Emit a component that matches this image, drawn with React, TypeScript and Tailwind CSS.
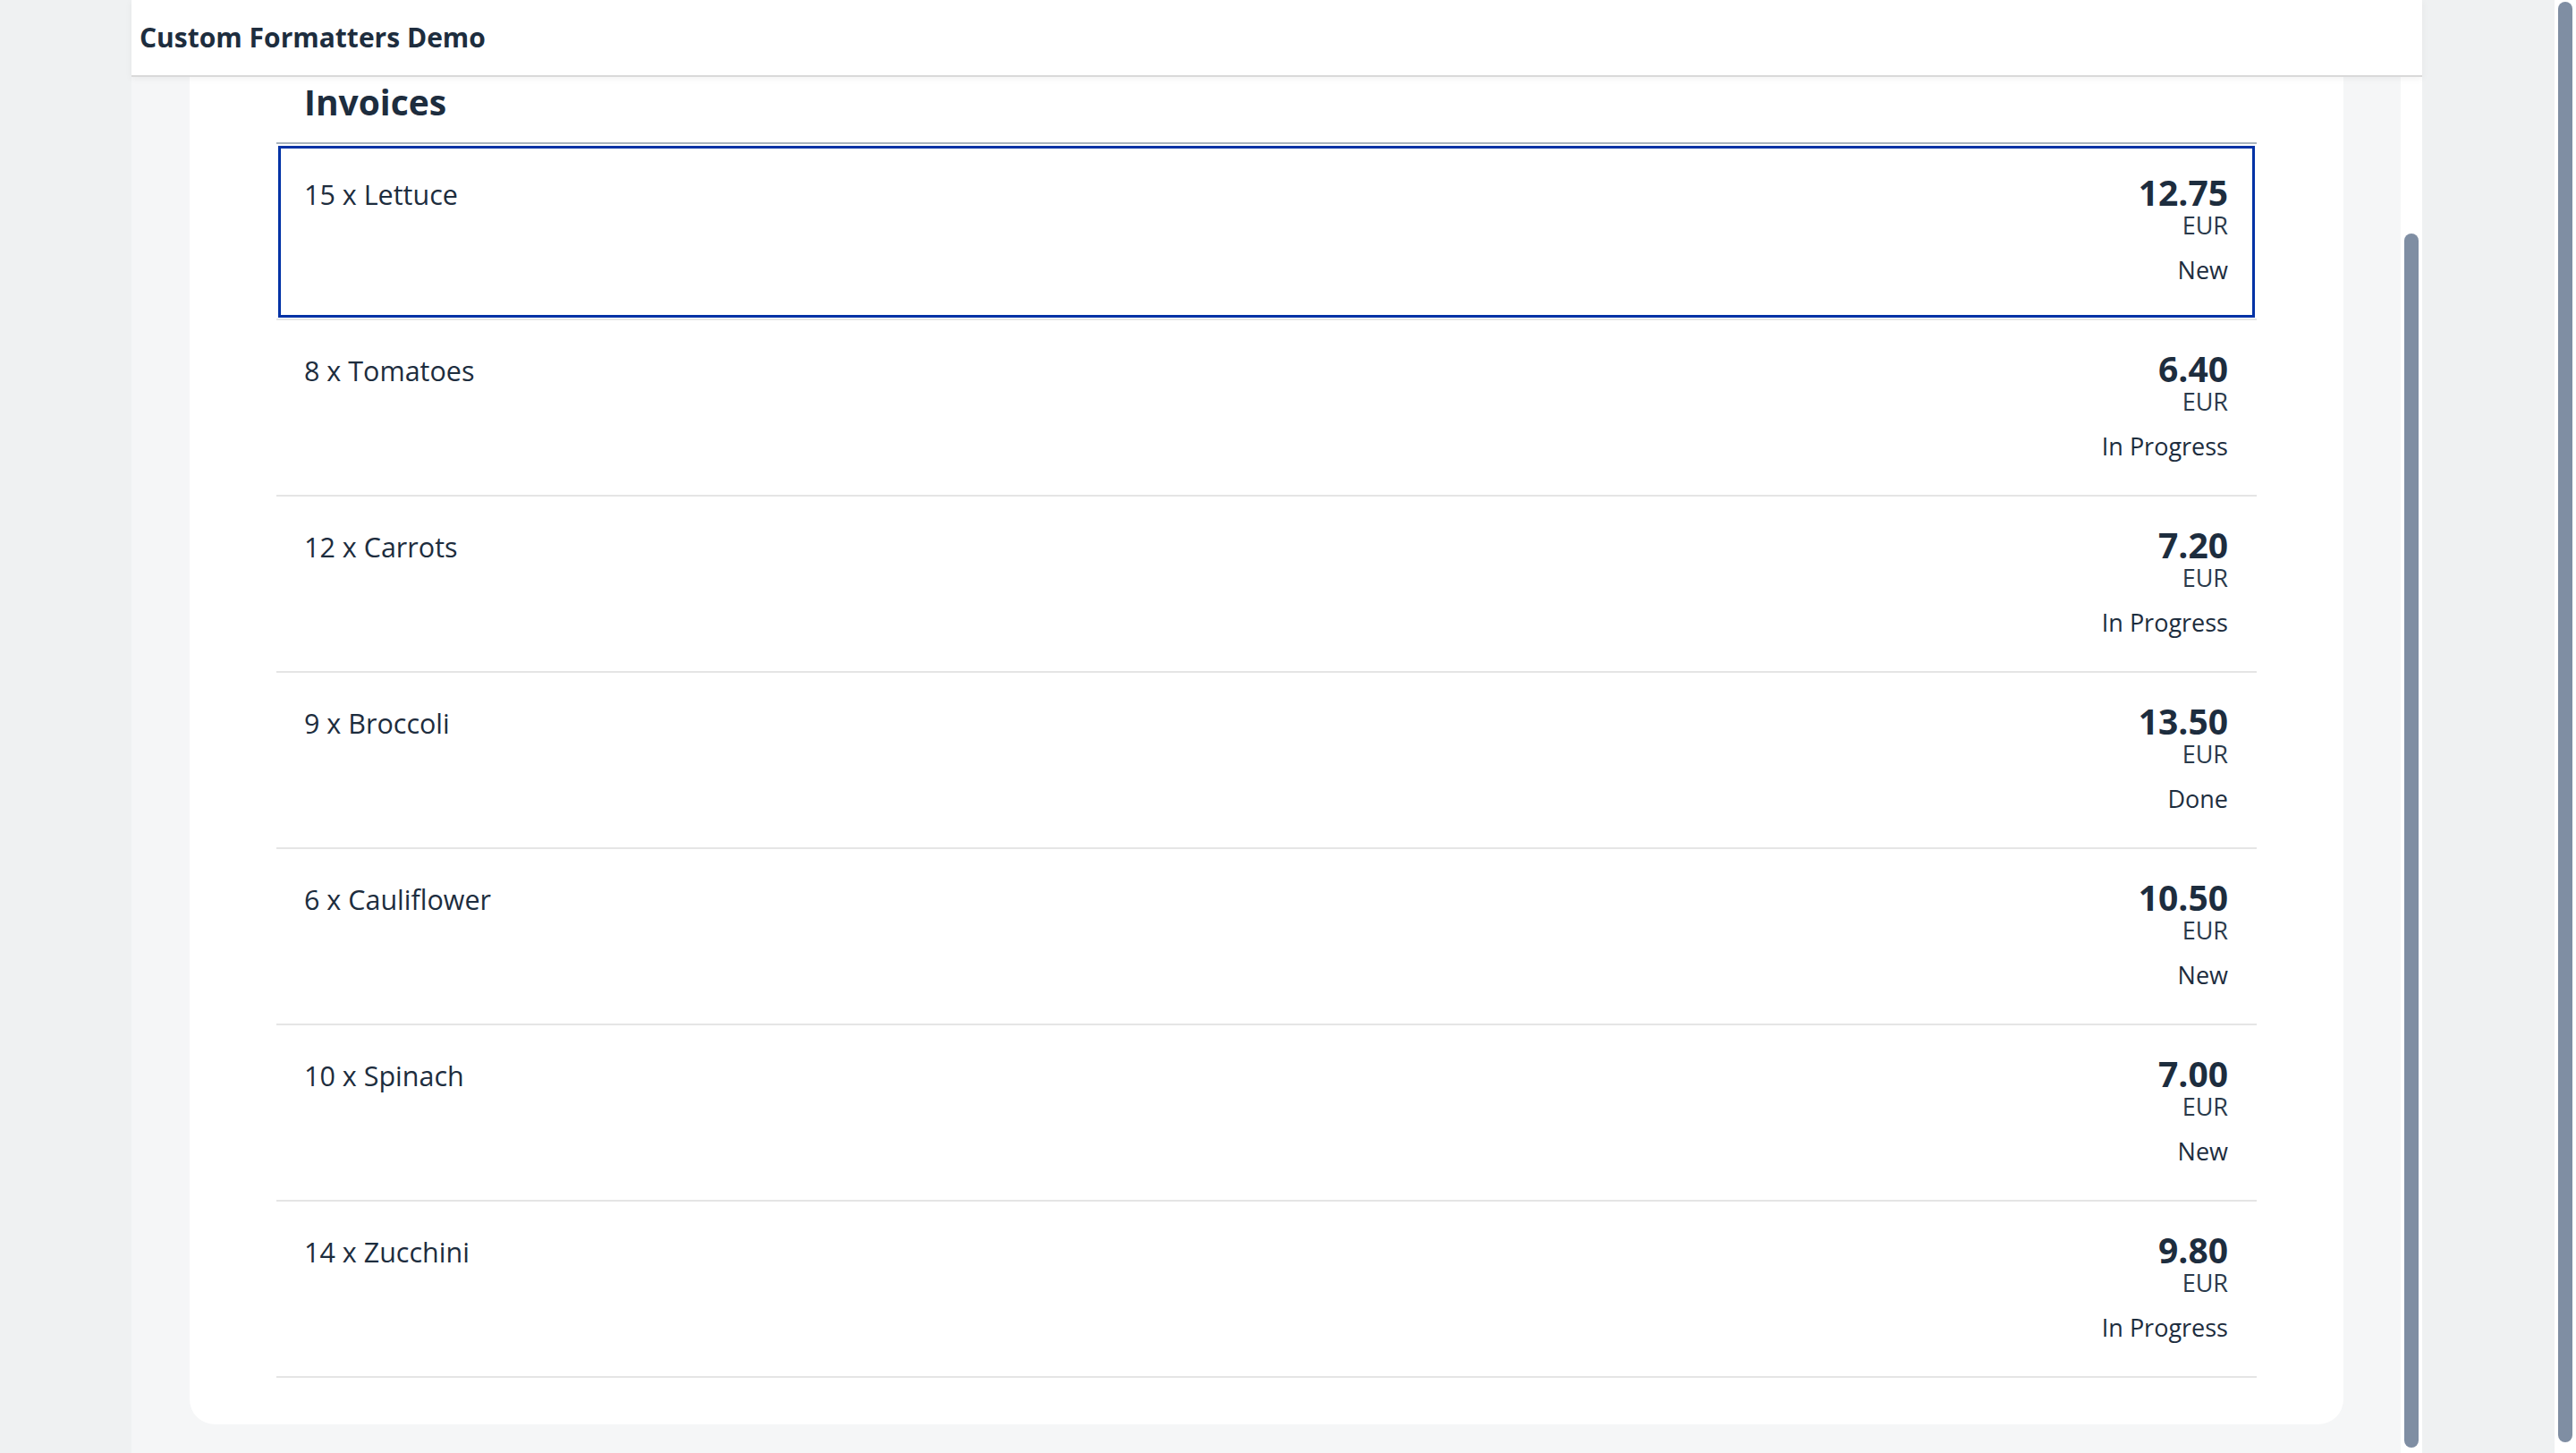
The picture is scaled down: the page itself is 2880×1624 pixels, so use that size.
import React from 'react'

interface Invoice {
    title: string
    amount: string
    currency: string
    status: string
}

const invoices: Invoice[] = [
    { title: '15 x Lettuce', amount: '12.75', currency: 'EUR', status: 'New' },
    { title: '8 x Tomatoes', amount: '6.40', currency: 'EUR', status: 'In Progress' },
    { title: '12 x Carrots', amount: '7.20', currency: 'EUR', status: 'In Progress' },
    { title: '9 x Broccoli', amount: '13.50', currency: 'EUR', status: 'Done' },
    { title: '6 x Cauliflower', amount: '10.50', currency: 'EUR', status: 'New' },
    { title: '10 x Spinach', amount: '7.00', currency: 'EUR', status: 'New' },
    { title: '14 x Zucchini', amount: '9.80', currency: 'EUR', status: 'In Progress' },
]

function InvoiceRow({ invoice, focused }: { invoice: Invoice; focused: boolean }) {
    return (
        <li className="relative h-[197px] border-b-2 border-[#e5e5e5] flex justify-between pl-[31px] pr-[32px] pt-[32px]">
            <div className="mt-[6px] text-[30.5px] leading-[36px] text-[#1d2d3e]">{invoice.title}</div>
            <div className="flex flex-col items-end text-[#1d2d3e]">
                <span className="text-[39px] leading-[44px] font-bold">{invoice.amount}</span>
                <span className="text-[27px] leading-[30px] text-[#2a3a4b]">{invoice.currency}</span>
                <span className="mt-[19px] text-[27px] leading-[32px]">{invoice.status}</span>
            </div>
            {/* keyboard focus ring */}
            {focused && (
                <div className="absolute top-[2px] left-[2px] right-[2px] bottom-[1px] border-[3.5px] border-[#0032a5] pointer-events-none" />
            )}
        </li>
    )
}

export default function App() {
    return (
        <div
            className="w-[2880px] h-[1624px] overflow-hidden flex bg-[#eff1f2]"
            style={{ fontFamily: '"Open Sans", "Noto Sans", sans-serif' }}
        >
            <div className="w-[147px] shrink-0" />

            {/* Shell */}
            <div className="w-[2561px] shrink-0 flex flex-col bg-white">
                <header className="relative z-10 h-[86px] shrink-0 flex items-center pl-[9px] border-b-2 border-[#d9d9d9] bg-white shadow-[0_2px_8px_rgba(0,0,0,0.05)]">
                    <h1 className="text-[30px] leading-[36px] font-bold text-[#1d2d3e] pb-[1px]">Custom Formatters Demo</h1>
                </header>

                <div className="flex-1 flex min-h-0">
                    <div className="w-[2537px] shrink-0 bg-[#f5f6f7] pl-[65px] pr-[64px]">
                        <section className="bg-white rounded-b-[28px] px-[97px] pb-[52px]">
                            <h2 className="pt-[4px] pl-[31px] text-[39px] leading-[48px] font-bold text-[#1d2d3e]">Invoices</h2>
                            <ul className="mt-[21px] border-t-2 border-[#a8b3bd]">
                                {invoices.map((inv, i) => (
                                    <InvoiceRow key={inv.title} invoice={inv} focused={i === 0} />
                                ))}
                            </ul>
                        </section>
                    </div>
                    {/* inner scrollbar */}
                    <div className="w-[24px] shrink-0 bg-white pl-[4px] pt-[175px]">
                        <div className="w-[16px] h-[1357px] rounded-full bg-[#7f8ea3]" />
                    </div>
                </div>
            </div>

            <div className="w-[148px] shrink-0" />

            {/* page scrollbar */}
            <div className="w-[24px] shrink-0 bg-white pl-[4px] pt-[2px]">
                <div className="w-[16px] h-[1610px] rounded-full bg-[#7f8ea3]" />
            </div>
        </div>
    )
}
